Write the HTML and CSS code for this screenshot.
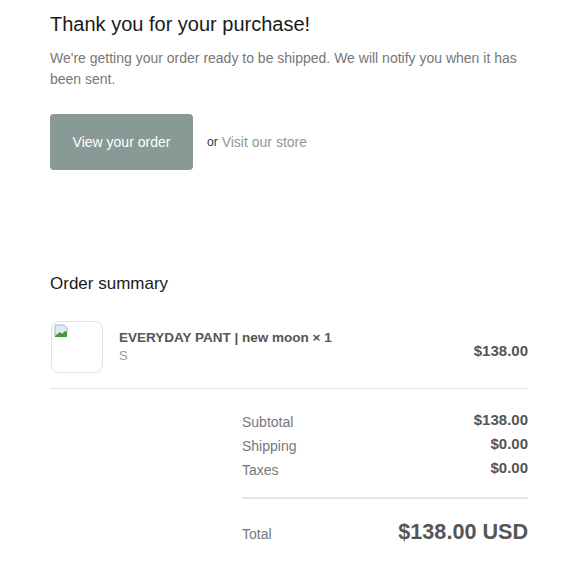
FILE: index.html
```html
<!DOCTYPE html>
<html>
<head>
<meta charset="utf-8">
<link rel="stylesheet" href="styles.css">
</head>
<body>
<div class="page">
  <section class="intro">
    <h2 class="title">Thank you for your purchase!</h2>
    <p class="lead">We're getting your order ready to be shipped. We will notify you when it has been sent.</p>
    <div class="actions">
      <a class="btn">View your order</a>
      <span class="or">or</span>
      <a class="store">Visit our store</a>
    </div>
  </section>

  <section class="summary">
    <h3 class="summary-title">Order summary</h3>
    <div class="item">
      <div class="thumb">
        <svg class="broken" width="14" height="14" viewBox="0 0 14 14">
          <path d="M1 1h9l3 3v5l-2 -1.5 -3 3 -2 -2 -5 4z" fill="#dfe9f5" stroke="#9aa7b5" stroke-width="0.8"/>
          <path d="M1 12l5-4 2 2 3-3 2 1.5V13H1z" fill="#3f9a3c"/>
        </svg>
      </div>
      <div class="item-info">
        <div class="item-name">EVERYDAY PANT | new moon × 1</div>
        <div class="item-variant">S</div>
      </div>
      <div class="item-price">$138.00</div>
    </div>

    <div class="totals">
      <div class="row"><span class="label">Subtotal</span><span class="value">$138.00</span></div>
      <div class="row"><span class="label">Shipping</span><span class="value">$0.00</span></div>
      <div class="row"><span class="label">Taxes</span><span class="value">$0.00</span></div>
      <div class="row total"><span class="label">Total</span><span class="value">$138.00 USD</span></div>
    </div>
  </section>
</div>
</body>
</html>
```

FILE: styles.css
```css
* { box-sizing: border-box; }
body {
  margin: 0;
  background: #fff;
  font-family: "Liberation Sans", Arial, sans-serif;
  color: #333;
}
.page {
  width: 478px;
  margin-left: 50px;
}
.title {
  margin: 0;
  padding-top: 11px;
  font-size: 20px;
  font-weight: 400;
  line-height: 26px;
  color: #1a1a1a;
}
.lead {
  margin: 11px 0 0;
  font-size: 14px;
  line-height: 21px;
  color: #777;
}
.actions {
  display: flex;
  align-items: center;
  margin-top: 24px;
}
.btn {
  display: flex;
  align-items: center;
  justify-content: center;
  width: 143px;
  height: 56px;
  background: #889996;
  border-radius: 4px;
  color: #fff;
  font-size: 14px;
}
.or {
  margin-left: 14px;
  font-size: 12px;
  color: #333;
}
.store {
  margin-left: 4px;
  font-size: 14px;
  color: #8a9a98;
}
.summary {
  margin-top: 102px;
}
.summary-title {
  margin: 0;
  font-size: 17px;
  font-weight: 400;
  line-height: 24px;
  color: #1a1a1a;
}
.item {
  display: flex;
  align-items: center;
  margin-top: 25px;
  padding-bottom: 15px;
  border-bottom: 1px solid #e5e5e5;
}
.thumb {
  position: relative;
  width: 52px;
  height: 52px;
  border: 1px solid #e2e2e2;
  border-radius: 8px;
  margin-left: 1px;
}
.broken {
  position: absolute;
  left: 2px;
  top: 2px;
}
.item-info {
  flex: 1;
  margin-left: 16px;
  margin-top: -1px;
}
.item-name {
  font-size: 13.5px;
  font-weight: 700;
  color: #555;
}
.item-variant {
  margin-top: 3px;
  font-size: 13px;
  color: #999;
}
.item-price {
  margin-top: 6px;
  font-size: 15px;
  font-weight: 700;
  color: #555;
}
.totals {
  margin-left: 192px;
  margin-top: 22px;
}
.row {
  display: flex;
  justify-content: space-between;
  align-items: flex-start;
  height: 24px;
}
.label {
  font-size: 14px;
  color: #777;
  padding-top: 3px;
}
.value {
  font-size: 15px;
  font-weight: 700;
  color: #555;
}
.row.total {
  height: auto;
  margin-top: 14px;
  padding-top: 20px;
  border-top: 2px solid #e5e5e5;
  align-items: center;
}
.row.total .value {
  font-size: 21.6px;
}
```
